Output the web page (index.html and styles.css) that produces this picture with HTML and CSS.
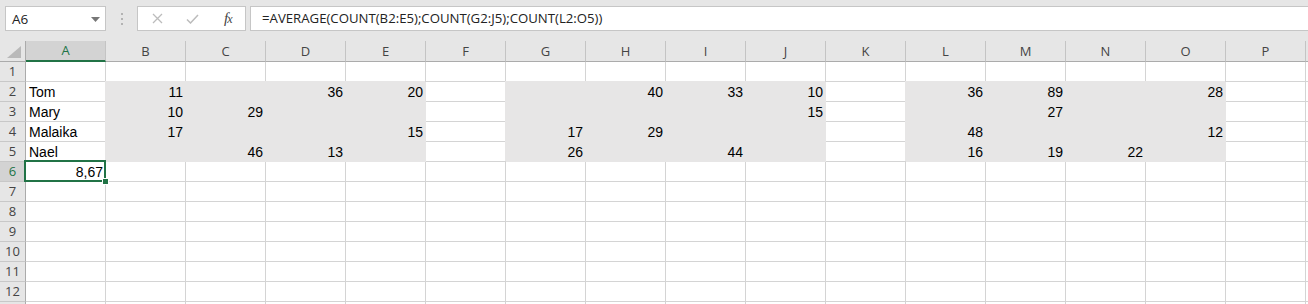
FILE: index.html
```html
<!DOCTYPE html>
<html>
<head>
<meta charset="utf-8">
<link rel="stylesheet" href="styles.css">
</head>
<body>
<div class="toolbar">
  <div class="namebox"><span>A6</span><svg class="drop" width="9" height="5" viewBox="0 0 9 5"><path d="M0 0H9L4.5 5Z" fill="#777"/></svg></div>
  <div class="grip"><svg width="3" height="12" viewBox="0 0 3 12"><rect x="0" y="0" width="2" height="2" fill="#b3b3b3"/><rect x="0" y="5" width="2" height="2" fill="#b3b3b3"/><rect x="0" y="10" width="2" height="2" fill="#b3b3b3"/></svg></div>
  <div class="fbtns">
    <svg class="ic-x" width="11" height="11" viewBox="0 0 11 11"><path d="M1 1L10 10M10 1L1 10" stroke="#bcbcbc" stroke-width="1.3" fill="none"/></svg>
    <svg class="ic-ok" width="13" height="10" viewBox="0 0 13 10"><path d="M1 5.5L4.5 9L12 1" stroke="#bcbcbc" stroke-width="1.5" fill="none"/></svg>
    <span class="fx"><i>f</i><i class="x">x</i></span>
  </div>
  <div class="formula">=AVERAGE(COUNT(B2:E5);COUNT(G2:J5);COUNT(L2:O5))</div>
</div>
<div class="sheet">
  <div class="corner"><svg width="14" height="12" viewBox="0 0 14 12"><path d="M14 0V12H0Z" fill="#b9b9b9"/></svg></div>
  <div class="ch sel">A</div><div class="ch">B</div><div class="ch">C</div><div class="ch">D</div><div class="ch">E</div><div class="ch">F</div><div class="ch">G</div><div class="ch">H</div><div class="ch">I</div><div class="ch">J</div><div class="ch">K</div><div class="ch">L</div><div class="ch">M</div><div class="ch">N</div><div class="ch">O</div><div class="ch">P</div><div class="ch"></div>

  <div class="rh">1</div><div class="c"></div><div class="c"></div><div class="c"></div><div class="c"></div><div class="c"></div><div class="c"></div><div class="c"></div><div class="c"></div><div class="c"></div><div class="c"></div><div class="c"></div><div class="c"></div><div class="c"></div><div class="c"></div><div class="c"></div><div class="c"></div><div class="c"></div>

  <div class="rh">2</div><div class="c">Tom</div><div class="c s n">11</div><div class="c s"></div><div class="c s n">36</div><div class="c s n">20</div><div class="c"></div><div class="c s"></div><div class="c s n">40</div><div class="c s n">33</div><div class="c s n">10</div><div class="c"></div><div class="c s n">36</div><div class="c s n">89</div><div class="c s"></div><div class="c s n">28</div><div class="c"></div><div class="c"></div>

  <div class="rh">3</div><div class="c">Mary</div><div class="c s n">10</div><div class="c s n">29</div><div class="c s"></div><div class="c s"></div><div class="c"></div><div class="c s"></div><div class="c s"></div><div class="c s"></div><div class="c s n">15</div><div class="c"></div><div class="c s"></div><div class="c s n">27</div><div class="c s"></div><div class="c s"></div><div class="c"></div><div class="c"></div>

  <div class="rh">4</div><div class="c">Malaika</div><div class="c s n">17</div><div class="c s"></div><div class="c s"></div><div class="c s n">15</div><div class="c"></div><div class="c s n">17</div><div class="c s n">29</div><div class="c s"></div><div class="c s"></div><div class="c"></div><div class="c s n">48</div><div class="c s"></div><div class="c s"></div><div class="c s n">12</div><div class="c"></div><div class="c"></div>

  <div class="rh">5</div><div class="c">Nael</div><div class="c s"></div><div class="c s n">46</div><div class="c s n">13</div><div class="c s"></div><div class="c"></div><div class="c s n">26</div><div class="c s"></div><div class="c s n">44</div><div class="c s"></div><div class="c"></div><div class="c s n">16</div><div class="c s n">19</div><div class="c s n">22</div><div class="c s"></div><div class="c"></div><div class="c"></div>

  <div class="rh sel">6</div><div class="c n cur">8,67</div><div class="c"></div><div class="c"></div><div class="c"></div><div class="c"></div><div class="c"></div><div class="c"></div><div class="c"></div><div class="c"></div><div class="c"></div><div class="c"></div><div class="c"></div><div class="c"></div><div class="c"></div><div class="c"></div><div class="c"></div><div class="c"></div>

  <div class="rh">7</div><div class="c"></div><div class="c"></div><div class="c"></div><div class="c"></div><div class="c"></div><div class="c"></div><div class="c"></div><div class="c"></div><div class="c"></div><div class="c"></div><div class="c"></div><div class="c"></div><div class="c"></div><div class="c"></div><div class="c"></div><div class="c"></div><div class="c"></div>

  <div class="rh">8</div><div class="c"></div><div class="c"></div><div class="c"></div><div class="c"></div><div class="c"></div><div class="c"></div><div class="c"></div><div class="c"></div><div class="c"></div><div class="c"></div><div class="c"></div><div class="c"></div><div class="c"></div><div class="c"></div><div class="c"></div><div class="c"></div><div class="c"></div>

  <div class="rh">9</div><div class="c"></div><div class="c"></div><div class="c"></div><div class="c"></div><div class="c"></div><div class="c"></div><div class="c"></div><div class="c"></div><div class="c"></div><div class="c"></div><div class="c"></div><div class="c"></div><div class="c"></div><div class="c"></div><div class="c"></div><div class="c"></div><div class="c"></div>

  <div class="rh">10</div><div class="c"></div><div class="c"></div><div class="c"></div><div class="c"></div><div class="c"></div><div class="c"></div><div class="c"></div><div class="c"></div><div class="c"></div><div class="c"></div><div class="c"></div><div class="c"></div><div class="c"></div><div class="c"></div><div class="c"></div><div class="c"></div><div class="c"></div>

  <div class="rh">11</div><div class="c"></div><div class="c"></div><div class="c"></div><div class="c"></div><div class="c"></div><div class="c"></div><div class="c"></div><div class="c"></div><div class="c"></div><div class="c"></div><div class="c"></div><div class="c"></div><div class="c"></div><div class="c"></div><div class="c"></div><div class="c"></div><div class="c"></div>

  <div class="rh">12</div><div class="c"></div><div class="c"></div><div class="c"></div><div class="c"></div><div class="c"></div><div class="c"></div><div class="c"></div><div class="c"></div><div class="c"></div><div class="c"></div><div class="c"></div><div class="c"></div><div class="c"></div><div class="c"></div><div class="c"></div><div class="c"></div><div class="c"></div>

  <div class="rh"></div><div class="c"></div><div class="c"></div><div class="c"></div><div class="c"></div><div class="c"></div><div class="c"></div><div class="c"></div><div class="c"></div><div class="c"></div><div class="c"></div><div class="c"></div><div class="c"></div><div class="c"></div><div class="c"></div><div class="c"></div><div class="c"></div><div class="c"></div>
</div>
</body>
</html>
```
FILE: styles.css
```css
html, body {
  margin: 0;
  padding: 0;
  background: #ffffff;
  overflow: hidden;
}
body {
  width: 1308px;
  height: 304px;
  font-family: "Liberation Sans", Arial, sans-serif;
}

/* ---------- formula bar ---------- */
.toolbar {
  display: flex;
  align-items: flex-start;
  height: 41px;
  box-sizing: border-box;
  padding: 6px 0 0 5px;
  background: #e6e6e6;
}
.namebox {
  width: 101px;
  height: 25px;
  box-sizing: border-box;
  border: 1px solid #c6c6c6;
  background: #fff;
  display: flex;
  align-items: center;
  justify-content: space-between;
  padding: 0 5px 0 6px;
  font: 13.5px "Open Sans", sans-serif;
  color: #222;
}
.namebox .drop {
  margin-top: 1px;
}
.grip {
  width: 31px;
  height: 25px;
  display: flex;
  align-items: center;
  justify-content: center;
  padding-left: 1px;
  box-sizing: border-box;
}
.fbtns {
  width: 109px;
  height: 25px;
  box-sizing: border-box;
  border: 1px solid #c6c6c6;
  background: #fff;
  display: flex;
  align-items: center;
  padding-left: 14px;
}
.ic-x { margin-right: 23px; }
.ic-ok { margin-right: 25px; margin-top: 1px; }
.fx {
  font-family: "Liberation Serif", "Times New Roman", serif;
  font-size: 15px;
  color: #444;
  letter-spacing: -1px;
}
.fx .x { font-size: 12px; }
.formula {
  flex: 1;
  margin-left: 4px;
  margin-right: -2px;
  height: 25px;
  box-sizing: border-box;
  border: 1px solid #c6c6c6;
  background: #fff;
  padding-left: 11px;
  font: 13.2px/23px "Open Sans", sans-serif;
  color: #222;
  white-space: nowrap;
}

/* ---------- sheet grid ---------- */
.sheet {
  display: grid;
  grid-template-columns: 26px repeat(17, 80px);
  grid-template-rows: 21px;
  grid-auto-rows: 20px;
}
.corner {
  background: #e6e6e6;
  border-right: 1px solid #ababab;
  border-bottom: 1px solid #ababab;
  box-sizing: border-box;
  display: flex;
  align-items: flex-end;
  justify-content: flex-end;
  padding: 0 4px 3px 0;
}
.ch {
  background: #e6e6e6;
  box-sizing: border-box;
  border-right: 1px solid #c4c4c4;
  border-bottom: 1px solid #ababab;
  text-align: center;
  font: 13px/20px "Open Sans", sans-serif;
  color: #444;
}
.ch.sel {
  background: #d3d3d3;
  color: #217346;
  border-bottom: 2px solid #217346;
  line-height: 19px;
}
.rh {
  background: #e6e6e6;
  box-sizing: border-box;
  border-right: 1px solid #ababab;
  border-bottom: 1px solid #c8c8c8;
  text-align: center;
  font: 13px/19px "Open Sans", sans-serif;
  color: #444;
}
.rh.sel {
  background: #d3d3d3;
  color: #217346;
}
.c {
  box-sizing: border-box;
  border-right: 1px solid #d4d4d4;
  border-bottom: 1px solid #d4d4d4;
  padding: 0 3px;
  font-size: 14px;
  line-height: 20px;
  color: #000;
  white-space: nowrap;
}
.n {
  text-align: right;
  padding-right: 2px;
}
.s {
  background: #e7e6e6;
  border-color: #e7e6e6;
  box-shadow: -1px -1px 0 #e7e6e6;
}
.cur {
  position: relative;
}
.cur::before {
  content: "";
  position: absolute;
  left: -2px;
  top: -2px;
  right: -1px;
  bottom: -1px;
  border: 2px solid #217346;
  z-index: 1;
}
.cur::after {
  content: "";
  position: absolute;
  right: -4px;
  bottom: -4px;
  width: 5px;
  height: 5px;
  background: #217346;
  border: 1px solid #fff;
  z-index: 2;
}
```
